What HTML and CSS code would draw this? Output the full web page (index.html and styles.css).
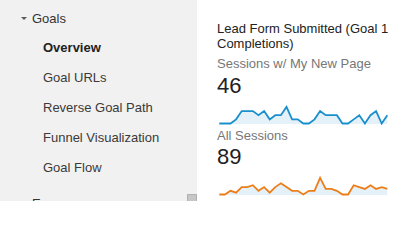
FILE: index.html
```html
<!DOCTYPE html>
<html>
<head>
<meta charset="utf-8">
<link rel="stylesheet" href="styles.css">
</head>
<body>
<div class="page">
  <nav class="sidebar">
    <div class="group"><span class="caret"></span>Goals</div>
    <div class="item active">Overview</div>
    <div class="item">Goal URLs</div>
    <div class="item">Reverse Goal Path</div>
    <div class="item">Funnel Visualization</div>
    <div class="item">Goal Flow</div>
    <div class="group next"><span class="caret"></span>Ecommerce</div>
    <div class="thumb"></div>
  </nav>
  <main class="content">
    <div class="title">Lead Form Submitted (Goal 1 Completions)</div>
    <div class="label">Sessions w/ My New Page</div>
    <div class="value">46</div>
    <svg class="spark" viewBox="0 0 172 22" width="172" height="22">
      <polygon class="area" points="2.3,21 2.3,20.5 7.9,20.5 13.5,20.5 19.1,16.35 24.7,8.05 30.3,8.05 35.9,8.05 41.5,12.2 47.1,8.05 52.7,16.35 58.3,12.2 63.9,12.2 69.5,3.9 75.1,16.35 80.7,16.35 86.3,20.5 91.9,20.5 97.5,16.35 103.1,8.05 108.7,12.2 114.3,12.2 119.9,12.2 125.5,20.5 131.1,20.5 136.7,16.35 142.3,12.2 147.9,20.5 153.5,12.2 159.1,8.05 164.7,20.5 170.3,12.2 170.3,21"/>
      <polyline class="line blue" points="2.3,20.5 7.9,20.5 13.5,20.5 19.1,16.35 24.7,8.05 30.3,8.05 35.9,8.05 41.5,12.2 47.1,8.05 52.7,16.35 58.3,12.2 63.9,12.2 69.5,3.9 75.1,16.35 80.7,16.35 86.3,20.5 91.9,20.5 97.5,16.35 103.1,8.05 108.7,12.2 114.3,12.2 119.9,12.2 125.5,20.5 131.1,20.5 136.7,16.35 142.3,12.2 147.9,20.5 153.5,12.2 159.1,8.05 164.7,20.5 170.3,12.2"/>
    </svg>
    <div class="label second">All Sessions</div>
    <div class="value second">89</div>
    <svg class="spark" viewBox="0 0 172 22" width="172" height="22">
      <polygon class="area" points="2.3,21 2.3,20.5 7.9,20.5 13.5,16.79 19.1,18.65 24.7,13.08 30.3,13.08 35.9,11.23 41.5,16.79 47.1,13.08 52.7,18.65 58.3,13.08 63.9,9.37 69.5,13.08 75.1,16.79 80.7,16.79 86.3,20.5 91.9,16.79 97.5,16.79 103.1,3.8 108.7,14.94 114.3,14.94 119.9,16.79 125.5,20.5 131.1,20.5 136.7,11.23 142.3,13.08 147.9,14.94 153.5,11.23 159.1,14.94 164.7,13.08 170.3,14.94 170.3,21"/>
      <polyline class="line orange" points="2.3,20.5 7.9,20.5 13.5,16.79 19.1,18.65 24.7,13.08 30.3,13.08 35.9,11.23 41.5,16.79 47.1,13.08 52.7,18.65 58.3,13.08 63.9,9.37 69.5,13.08 75.1,16.79 80.7,16.79 86.3,20.5 91.9,16.79 97.5,16.79 103.1,3.8 108.7,14.94 114.3,14.94 119.9,16.79 125.5,20.5 131.1,20.5 136.7,11.23 142.3,13.08 147.9,14.94 153.5,11.23 159.1,14.94 164.7,13.08 170.3,14.94"/>
    </svg>
  </main>
</div>
</body>
</html>
```
FILE: styles.css
```css
html, body {
  margin: 0;
  padding: 0;
  background: #ffffff;
  overflow: hidden;
}

body {
  font-family: "Liberation Sans", Arial, sans-serif;
  font-size: 13px;
  color: #333333;
}

.page {
  display: flex;
  width: 396px;
  height: 201px;
  overflow: hidden;
}

.sidebar {
  position: relative;
  flex: 0 0 197px;
  background: #f1f1f1;
  padding-top: 3px;
  box-sizing: border-box;
  overflow: hidden;
}

.group {
  display: flex;
  align-items: center;
  height: 30px;
  padding-left: 21px;
  color: #333333;
  white-space: nowrap;
}

.group.next {
  margin-top: 5px;
}

.caret {
  width: 0;
  height: 0;
  border-left: 3px solid transparent;
  border-right: 3px solid transparent;
  border-top: 3px solid #5a5a5a;
  margin-right: 5px;
  margin-top: 1px;
}

.item {
  height: 30px;
  line-height: 30px;
  padding-left: 43px;
  color: #3a3a3a;
  white-space: nowrap;
}

.item.active {
  font-weight: bold;
  color: #222222;
}

.thumb {
  position: absolute;
  left: 187px;
  top: 194px;
  width: 8px;
  height: 12px;
  background: #c6c6c6;
  border: 1px solid #b2b2b2;
}

.content {
  flex: 1;
  padding: 21px 0 0 20px;
  box-sizing: border-box;
}

.title {
  width: 176px;
  line-height: 15px;
  color: #222222;
}

.label {
  margin-top: 5px;
  line-height: 15px;
  color: #777777;
}

.label.second {
  margin-top: 3px;
}

.value {
  margin-top: 3px;
  font-size: 22px;
  line-height: 24px;
  color: #222222;
}

.value.second {
  margin-top: 2px;
}

.spark {
  display: block;
  margin-top: 5px;
}

.area {
  fill: #e5f1f9;
}

.line {
  fill: none;
  stroke-width: 1.8;
  stroke-linejoin: miter;
}

.blue {
  stroke: #1a8fcc;
}

.orange {
  stroke: #ed7e17;
}
```
